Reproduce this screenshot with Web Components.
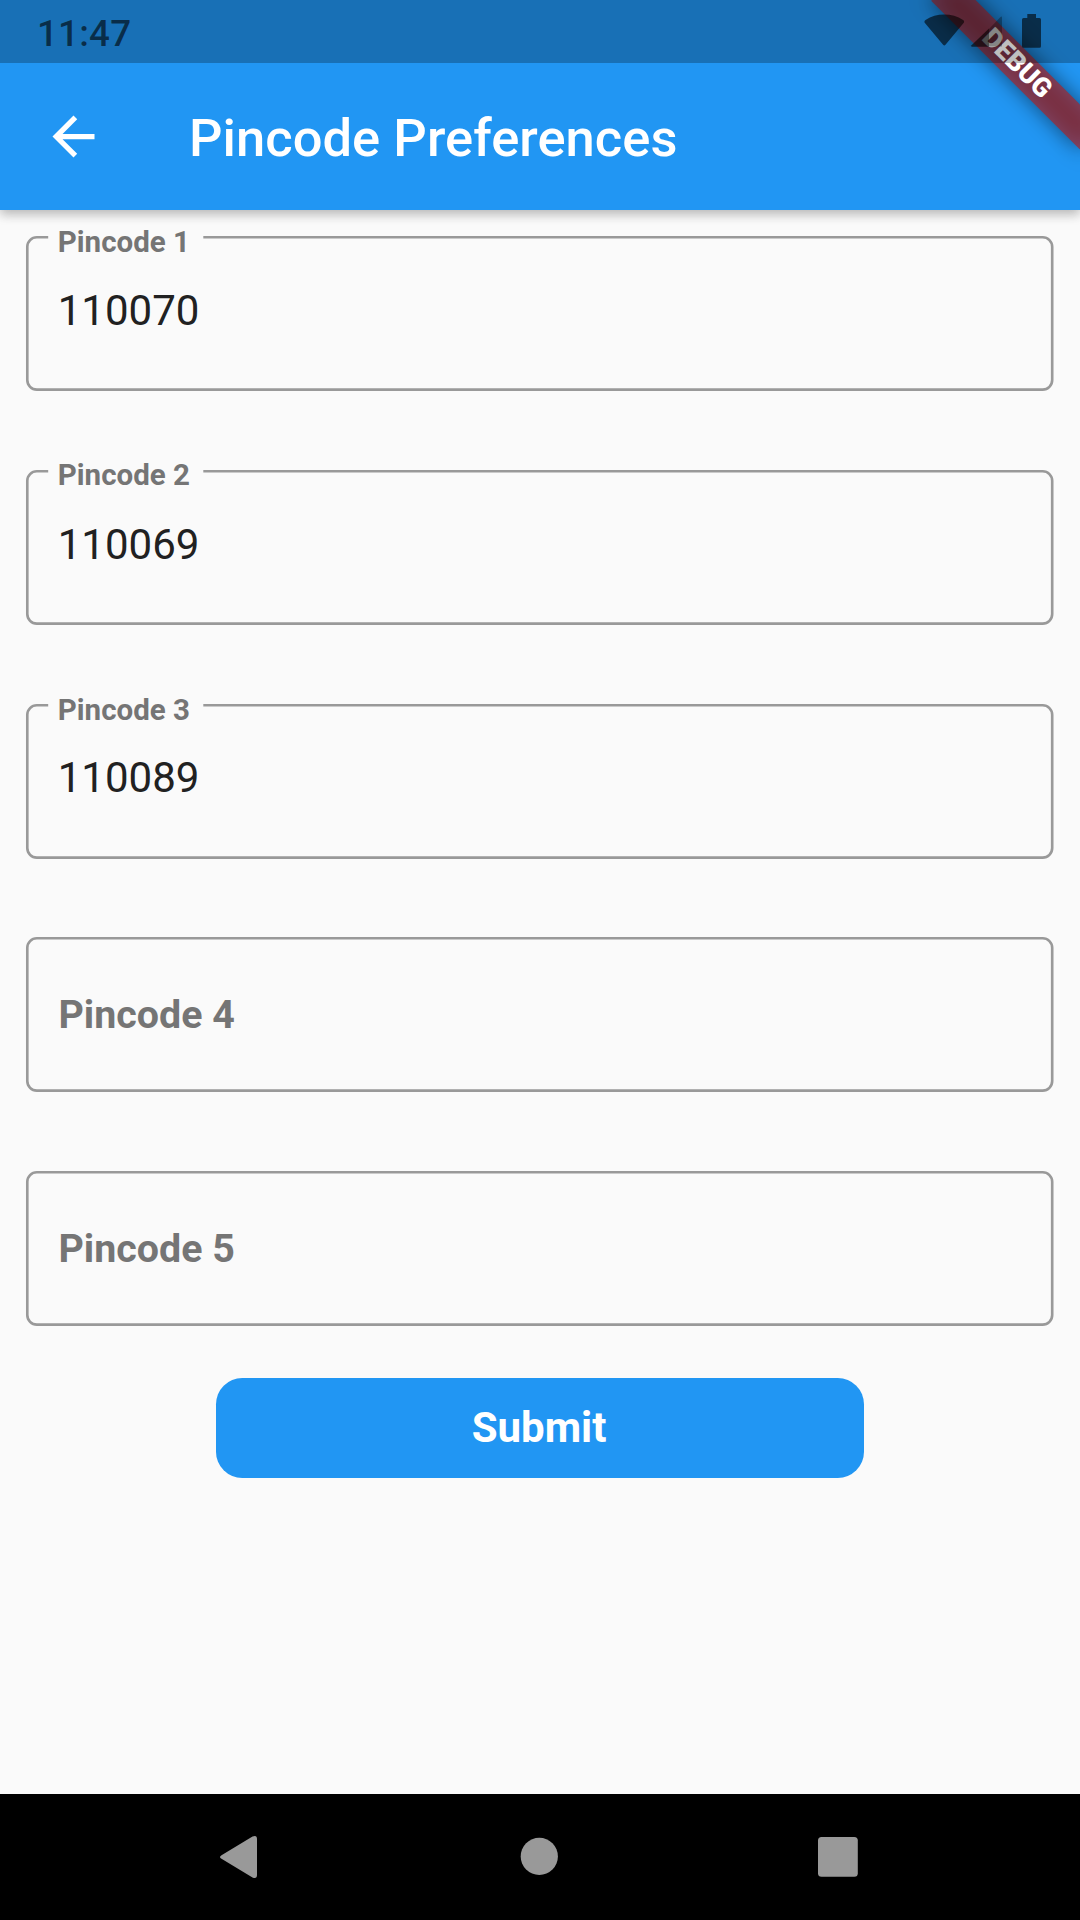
<!DOCTYPE html>
<html lang="en">
<head>
<meta charset="utf-8">
<title>Pincode Preferences</title>
<style>
  html, body { margin: 0; padding: 0; }
  body { width: 1080px; height: 1920px; overflow: hidden; font-family: Roboto, sans-serif; background: #fafafa; }
</style>
</head>
<body>
<phone-screen>
  <status-bar slot="status" time="11:47"></status-bar>
  <app-bar slot="bar">Pincode Preferences</app-bar>
  <debug-banner slot="banner">DEBUG</debug-banner>
  <pincode-form>
    <pin-field label="Pincode 1" value="110070"></pin-field>
    <pin-field label="Pincode 2" value="110069" style="--label-nudge: -1px; --value-nudge: 1px"></pin-field>
    <pin-field label="Pincode 3" value="110089" style="--label-nudge: 1px"></pin-field>
    <pin-field label="Pincode 4"></pin-field>
    <pin-field label="Pincode 5"></pin-field>
    <submit-button slot="action">Submit</submit-button>
  </pincode-form>
  <nav-bar slot="nav"></nav-bar>
</phone-screen>
<script>
function define(name, html) {
  customElements.define(name, class extends HTMLElement {
    constructor() {
      super();
      this.attachShadow({ mode: 'open' }).innerHTML = html;
    }
  });
}

define('phone-screen', `
  <style>
    :host { display: flex; flex-direction: column; position: relative; width: 1080px; height: 1920px; overflow: hidden; background: #fafafa; }
    main { flex: 1; }
    .banner, .status { position: absolute; top: 0; left: 0; width: 1080px; }
  </style>
  <slot name="bar"></slot>
  <main><slot></slot></main>
  <slot name="nav"></slot>
  <div class="banner"><slot name="banner"></slot></div>
  <div class="status"><slot name="status"></slot></div>
`);

define('app-bar', `
  <style>
    :host { display: flex; align-items: center; box-sizing: border-box; height: 210px; padding: 63px 42px 0; gap: 84px;
      background: #2196f3; color: #fff; box-shadow: 0 5px 10px rgba(0,0,0,.18), 0 2px 12px rgba(0,0,0,.12); }
    svg { display: block; width: 63px; height: 63px; fill: #fff; }
    h1 { margin: 0; font-size: 52.5px; font-weight: 500; line-height: 62px; padding-top: 2px; letter-spacing: .04px; white-space: nowrap; }
  </style>
  <svg viewBox="0 0 24 24"><path d="M20 11H7.83l5.59-5.59L12 4l-8 8 8 8 1.41-1.41L7.83 13H20v-2z"/></svg>
  <h1><slot></slot></h1>
`);

define('debug-banner', `
  <style>
    :host { display: block; position: relative; height: 0; }
    .strip { position: absolute; left: 975px; top: 73.5px; width: 210px; height: 31.5px; transform: rotate(45deg); transform-origin: 105px -73.5px; }
    .shade { position: absolute; inset: 0; background: rgba(0,0,0,.5); filter: blur(10.4px); }
    .label { position: relative; height: 31.5px; line-height: 31.5px; text-align: center; background: rgba(183,28,28,.627);
      color: #fff; font-size: 26.78px; font-weight: 900; }
  </style>
  <div class="strip"><div class="shade"></div><div class="label"><slot></slot></div></div>
`);

customElements.define('status-bar', class extends HTMLElement {
  constructor() {
    super();
    this.attachShadow({ mode: 'open' }).innerHTML = `
      <style>
        :host { display: flex; justify-content: space-between; height: 63px; padding: 0 37px; background: rgba(0,0,0,.25); color: rgba(0,0,0,.6); }
        .time { font-size: 36.75px; font-weight: 500; line-height: 68px; letter-spacing: .2px; }
        .icons { display: flex; }
        svg { display: block; fill: #000; }
      </style>
      <span class="time"></span>
      <span class="icons">
        <svg width="123" height="63" viewBox="920 0 123 63">
          <path fill-opacity=".6" d="M924.5 22.5Q924 20.8 925.5 20Q934 14.6 944.3 14.6Q954.600 14.600 963.100 20Q964.600 20.800 964 22.500L945.500 44.800Q944.300 46 943.100 44.800Z"/>
          <path fill-opacity=".3" d="M989 29L1000 17.500Q1002 15.500 1002 17.500V46.500H989Z"/>
          <path fill-opacity=".6" d="M989 28.600V46.700H972Q970.400 46.500 971.500 45.300Z"/>
          <path fill-opacity=".6" d="M1027.300 14H1036V18H1039.500Q1041 18 1041 19.500V46.200Q1041 47.700 1039.500 47.700H1023.500Q1022 47.700 1022 46.200V19.500Q1022 18 1023.500 18H1027.300Z"/>
        </svg>
      </span>`;
  }
  connectedCallback() {
    this.shadowRoot.querySelector('.time').textContent = this.getAttribute('time');
  }
});

define('pincode-form', `
  <style>
    :host { display: flex; flex-direction: column; padding: 26.25px 26.25px 0; }
    .fields { display: flex; flex-direction: column; gap: 78.75px; margin-bottom: 52.5px; }
  </style>
  <div class="fields"><slot></slot></div>
  <slot name="action"></slot>
`);

customElements.define('pin-field', class extends HTMLElement {
  constructor() {
    super();
    this.attachShadow({ mode: 'open' }).innerHTML = `
      <style>
        :host { display: grid; height: 154.875px; grid-template: 154.875px / 1fr; }
        svg { grid-area: 1 / 1; display: block; width: 1027.5px; height: 154.875px; overflow: visible; fill: none; stroke: #999; stroke-width: 2.625; }
        .content { grid-area: 1 / 1; display: flex; flex-direction: column; padding-left: 31.5px; }
        .label { font-weight: 700; color: #757575; font-size: 39.375px; line-height: 156.8px; padding-left: .7px; }
        .value { font-size: 42px; line-height: 50px; margin-top: calc(31.7px - var(--label-nudge, 0px) + var(--value-nudge, 0px)); color: #212121; }
        .filled .label { font-size: 29.53px; line-height: 24px; padding-left: 0; margin-top: calc(-6.3px + var(--label-nudge, 0px)); }
      </style>
      <svg><path/></svg>
      <div class="content"><span class="label"></span></div>`;
  }
  connectedCallback() {
    const root = this.shadowRoot;
    const content = root.querySelector('.content');
    const filled = this.hasAttribute('value');
    root.querySelector('.label').textContent = this.getAttribute('label');
    if (filled) {
      content.classList.add('filled');
      const v = document.createElement('span');
      v.className = 'value';
      v.textContent = this.getAttribute('value');
      content.append(v);
    }
    const start = filled ? 'M177.3 1.3' : 'M22.200 1.3';
    const end = filled ? 'H22.2' : 'Z';
    root.querySelector('path').setAttribute('d',
      start + 'H1016.7A9.500 9.500 0 0 1 1026.200 10.800V144.100A9.500 9.500 0 0 1 1016.700 153.600H10.800A9.500 9.500 0 0 1 1.300 144.100V10.800A9.500 9.500 0 0 1 10.800 1.300' + end);
  }
});

define('submit-button', `
  <style>
    :host { display: block; box-sizing: border-box; align-self: center; width: 648px; height: 99.75px; padding-right: 2px; border-radius: 26.25px; background: #2196f3;
      color: #fff; font-size: 42px; font-weight: 700; line-height: 99px; text-align: center; }
  </style>
  <slot></slot>
`);

define('nav-bar', `
  <style>
    :host { display: flex; justify-content: space-between; align-items: center; box-sizing: border-box; height: 126px; padding: 0 212px 0 209px; background: #000; }
    svg { display: block; width: 60px; height: 60px; fill: #999; }
  </style>
  <svg viewBox="0 0 60 60"><path d="M12.500 28.200L43.500 9.500Q48 7.500 48 12V48Q48 52.300 43.500 50.500L12.500 31.800Q9.500 30 12.500 28.200Z"/></svg>
  <svg viewBox="0 0 60 60"><circle cx="30.300" cy="29.400" r="18.600"/></svg>
  <svg viewBox="0 0 60 60"><rect x="10" y="10" width="39.800" height="39.800" rx="3.500"/></svg>
`);
</script>
</body>
</html>
